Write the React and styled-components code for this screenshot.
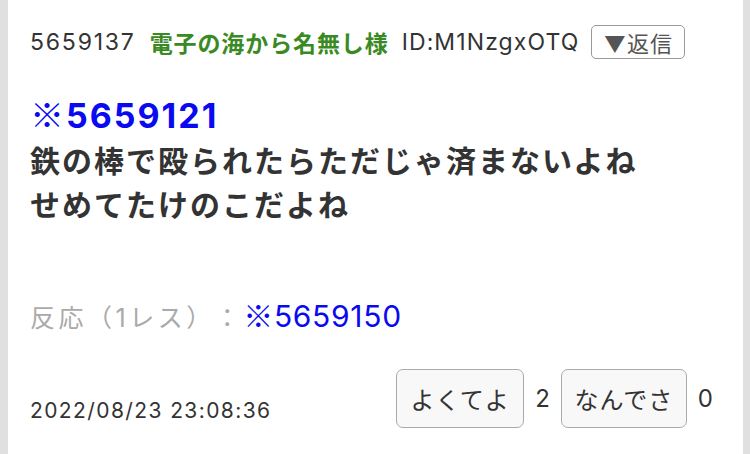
import React from "react";
import styled, { createGlobalStyle } from "styled-components";

const Global = createGlobalStyle`
  html, body { margin: 0; padding: 0; background: #e0e0e0; }
  body {
    font-family: Inter, "Noto Sans CJK JP", "Noto Sans", sans-serif;
    color: #333;
    text-spacing-trim: space-all;
  }
`;

const Page = styled.div`
  display: flex;
  padding: 0 7px 0 8px;
  height: 454px;
  box-sizing: border-box;
`;

const Post = styled.article`
  flex: 1;
  background: #fff;
  padding: 25px 30px 0 22px;
  display: flex;
  flex-direction: column;
`;

const Header = styled.div`
  display: flex;
  align-items: center;
  height: 34px;
  font-size: 23px;
  white-space: nowrap;
`;

const Num = styled.span`
  color: #333;
  letter-spacing: 1.8px;
  margin-right: 14px;
`;

const Name = styled.span`
  color: #3a8a24;
  font-weight: 700;
  font-size: 23px;
  letter-spacing: 0.9px;
  margin-right: 13px;
`;

const Id = styled.span`
  color: #333;
  letter-spacing: 1.1px;
  margin-right: 12px;
`;

const ReplyButton = styled.button`
  font-family: inherit;
  font-size: 22px;
  color: #555;
  background: #fff;
  border: 1.5px solid #999;
  border-radius: 5px;
  height: 34px;
  width: 94px;
  padding: 0;
  display: flex;
  align-items: center;
  justify-content: center;
  letter-spacing: 1px;
`;

const Kome = styled.span`
  font-family: "Noto Sans CJK JP", sans-serif;
  font-weight: ${(p) => (p.$bold ? 400 : 300)};
`;

const Body = styled.div`
  margin-top: 33px;
  font-size: 30px;
  line-height: 44px;
  font-weight: 700;
  color: #333;
  letter-spacing: 2px;
`;

const Anchor = styled.div`
  color: #0a0af0;
  font-size: 34px;
  letter-spacing: 2px;
  margin-bottom: 1px;
`;

const Reaction = styled.div`
  margin-top: 72px;
  font-size: 25px;
  line-height: 30px;
  color: #aaa;
  white-space: nowrap;
`;

const Muted = styled.span`
  letter-spacing: 3.5px;
`;

const Link = styled.span`
  color: #0a0af0;
  font-size: 30px;
  letter-spacing: 0.7px;
`;

const Footer = styled.div`
  margin-top: 36px;
  display: flex;
  align-items: flex-end;
  justify-content: space-between;
`;

const Date = styled.div`
  font-size: 21px;
  color: #333;
  letter-spacing: 1.4px;
  padding-bottom: 5px;
`;

const Votes = styled.div`
  display: flex;
  align-items: center;
  gap: 11px;
  font-size: 24px;
  color: #333;
`;

const VoteButton = styled.button`
  font-family: inherit;
  font-size: 24px;
  color: #333;
  background: #f8f8f8;
  border: 1.5px solid #aaa;
  border-radius: 7px;
  height: 59px;
  width: ${(p) => p.$w}px;
  padding: 0;
  letter-spacing: 1px;
`;

const Count = styled.span``;

export default function App() {
  return (
    <>
      <Global />
      <Page>
        <Post>
          <Header>
            <Num>5659137</Num>
            <Name>電子の海から名無し様</Name>
            <Id>ID:M1NzgxOTQ</Id>
            <ReplyButton>▼返信</ReplyButton>
          </Header>
          <Body>
            <Anchor>
              <Kome $bold>※</Kome>5659121
            </Anchor>
            <div>鉄の棒で殴られたらただじゃ済まないよね</div>
            <div>せめてたけのこだよね</div>
          </Body>
          <Reaction>
            <Muted>反応（1レス）：</Muted>
            <Link>
              <Kome>※</Kome>5659150
            </Link>
          </Reaction>
          <Footer>
            <Date>2022/08/23 23:08:36</Date>
            <Votes>
              <VoteButton $w={128}>よくてよ</VoteButton>
              <Count>2</Count>
              <VoteButton $w={126}>なんでさ</VoteButton>
              <Count>0</Count>
            </Votes>
          </Footer>
        </Post>
      </Page>
    </>
  );
}
